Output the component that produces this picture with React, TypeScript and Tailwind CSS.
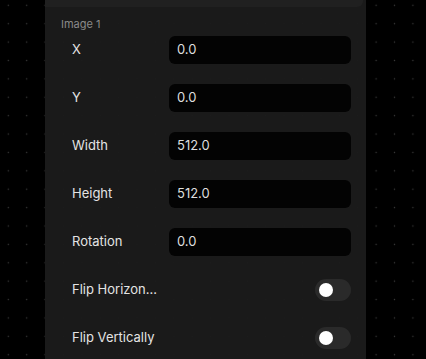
import React from "react";

const fields = [
  { label: "X", value: "0.0" },
  { label: "Y", value: "0.0" },
  { label: "Width", value: "512.0" },
  { label: "Height", value: "512.0" },
  { label: "Rotation", value: "0.0" },
];

const toggles = ["Flip Horizon...", "Flip Vertically"];

function Toggle() {
  return (
    <div className="flex h-[22px] w-[36px] items-center rounded-full bg-[#2a2a2a] px-[4px]">
      <div className="h-[14px] w-[14px] rounded-full bg-white" />
    </div>
  );
}

export default function App() {
  return (
    <div
      className="h-[359px] w-[426px] overflow-hidden bg-black"
      style={{
        backgroundImage: "radial-gradient(circle, #3a3a3a 0.8px, transparent 1px)",
        backgroundSize: "18.4px 18.4px",
        backgroundPosition: "-0.9px -3.9px",
        fontFamily: "Inter, 'Noto Sans', sans-serif",
      }}
    >
      <div className="ml-[45px] flex h-full w-[321px] flex-col bg-[#1b1b1b]/95">
        <div className="mr-[3px] h-[7px] rounded-br-md bg-[#202020]" />
        <div className="pl-[16px] pt-[10px] text-[11px] leading-[14px] text-[#8a8a8a]">Image 1</div>
        <div className="mt-[5px] flex flex-col gap-[20px] pr-[15px]">
          {fields.map((f) => (
            <div key={f.label} className="flex h-[28px] items-center">
              <div className="w-[124px] pl-[27px] text-[13px] text-[#e4e4e4]">{f.label}</div>
              <div className="flex h-[28px] flex-1 items-center rounded-md bg-[#030303] pl-[8px] text-[13px] text-[#dedede]">
                {f.value}
              </div>
            </div>
          ))}
          {toggles.map((t) => (
            <div key={t} className="flex h-[28px] items-center justify-between">
              <div className="pl-[27px] text-[13px] text-[#e4e4e4]">{t}</div>
              <Toggle />
            </div>
          ))}
        </div>
      </div>
    </div>
  );
}
